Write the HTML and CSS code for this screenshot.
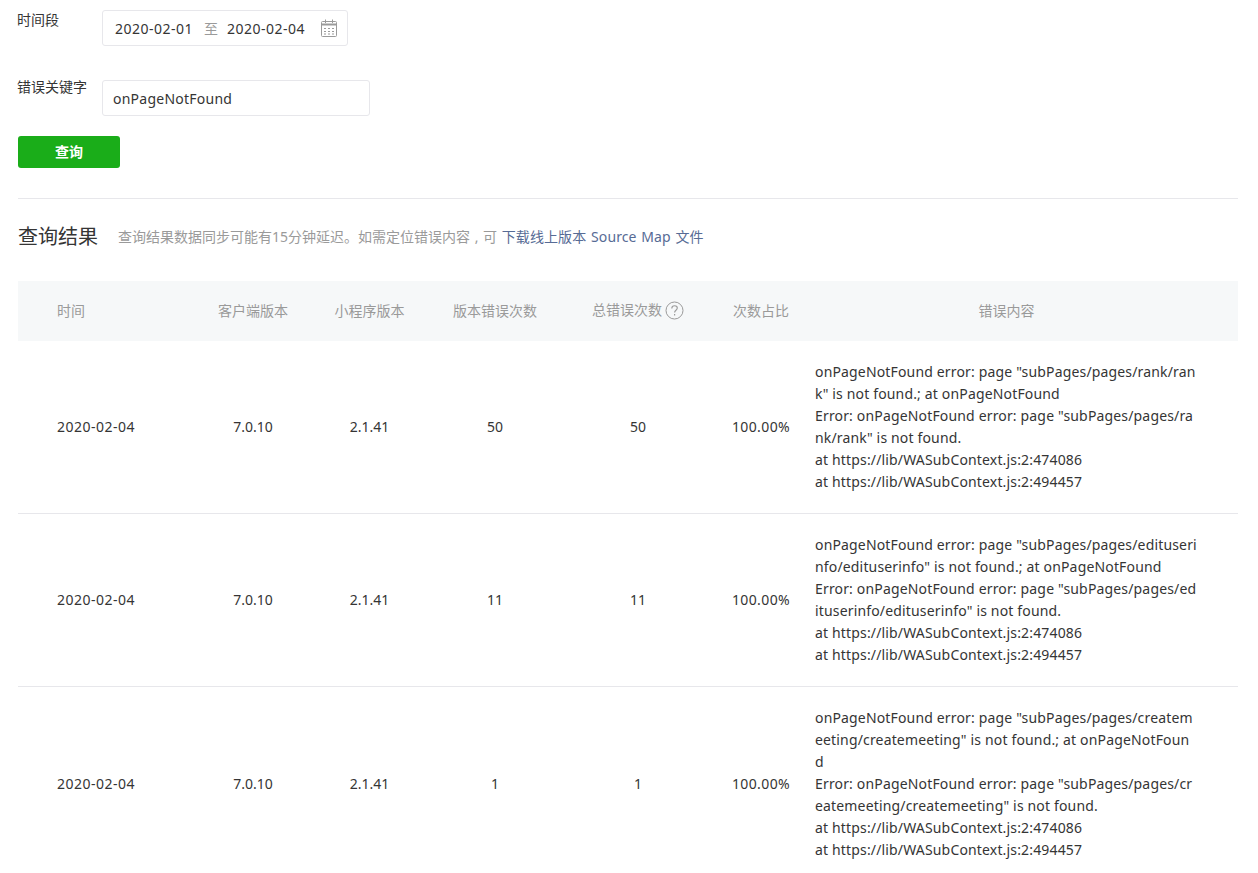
FILE: index.html
```html
<!DOCTYPE html>
<html lang="zh-CN">
<head>
<meta charset="utf-8">
<title>错误查询</title>
<link rel="stylesheet" href="styles.css">
</head>
<body>
<main class="page">
  <form class="form">
    <div class="field field-date">
      <label class="label">时间段</label>
      <div class="date-box">
        <span class="date">2020-02-01</span>
        <span class="to">至</span>
        <span class="date">2020-02-04</span>
        <svg class="cal" width="16" height="18" viewBox="0 0 16 18" fill="none" stroke="#9a9a9a" stroke-width="1">
          <rect x="0.5" y="2.5" width="15" height="15" rx="1"/>
          <path d="M0.5 5.5H15.5" stroke-width="2"/>
          <path d="M4.5 0.5V4M11.5 0.5V4"/>
          <path d="M3 9.5h2M7 9.5h2M11 9.5h2M3 12.5h2M7 12.5h2M11 12.5h2M3 15h2M7 15h2M11 15h2" stroke-width="1.2"/>
        </svg>
      </div>
    </div>
    <div class="field field-key">
      <label class="label">错误关键字</label>
      <div class="text-box">onPageNotFound</div>
    </div>
    <button class="btn" type="button">查询</button>
  </form>

  <section class="results">
    <div class="results-head">
      <h2 class="title">查询结果</h2>
      <p class="note">查询结果数据同步可能有15分钟延迟。如需定位错误内容 , 可 <a class="link" href="#">下载线上版本 Source Map 文件</a></p>
    </div>
    <table class="table">
      <colgroup>
        <col class="c1"><col class="c2"><col class="c3"><col class="c4"><col class="c5"><col class="c6"><col class="c7">
      </colgroup>
      <thead>
        <tr>
          <th class="first">时间</th>
          <th>客户端版本</th>
          <th>小程序版本</th>
          <th>版本错误次数</th>
          <th>总错误次数<svg class="help" width="19" height="19" viewBox="0 0 19 19" fill="none" stroke="#9a9a9a"><circle cx="9.5" cy="9.5" r="8.5"/><path d="M6.8 7.4c0-1.6 1.2-2.6 2.8-2.6 1.6 0 2.7 1 2.7 2.3 0 2.1-2.7 2.2-2.7 4.4" stroke-width="1.1"/><path d="M9.6 13v1.5" stroke-width="1.2"/></svg></th>
          <th>次数占比</th>
          <th class="last">错误内容</th>
        </tr>
      </thead>
      <tbody>
        <tr>
          <td class="first day">2020-02-04</td><td>7.0.10</td><td>2.1.41</td><td>50</td><td>50</td><td class="pct">100.00%</td>
          <td class="last msg">onPageNotFound error: page "subPages/pages/rank/rank" is not found.; at onPageNotFound<br>Error: onPageNotFound error: page "subPages/pages/rank/rank" is not found.<br>at https://lib/WASubContext.js:2:474086<br>at https://lib/WASubContext.js:2:494457</td>
        </tr>
        <tr>
          <td class="first day">2020-02-04</td><td>7.0.10</td><td>2.1.41</td><td>11</td><td>11</td><td class="pct">100.00%</td>
          <td class="last msg">onPageNotFound error: page "subPages/pages/edituserinfo/edituserinfo" is not found.; at onPageNotFound<br>Error: onPageNotFound error: page "subPages/pages/edituserinfo/edituserinfo" is not found.<br>at https://lib/WASubContext.js:2:474086<br>at https://lib/WASubContext.js:2:494457</td>
        </tr>
        <tr>
          <td class="first day">2020-02-04</td><td>7.0.10</td><td>2.1.41</td><td>1</td><td>1</td><td class="pct">100.00%</td>
          <td class="last msg">onPageNotFound error: page "subPages/pages/createmeeting/createmeeting" is not found.; at onPageNotFound<br>Error: onPageNotFound error: page "subPages/pages/createmeeting/createmeeting" is not found.<br>at https://lib/WASubContext.js:2:474086<br>at https://lib/WASubContext.js:2:494457</td>
        </tr>
      </tbody>
    </table>
  </section>
</main>
</body>
</html>
```
FILE: styles.css
```css
* { box-sizing: border-box; }
html, body { margin: 0; padding: 0; height: 873px; overflow: hidden; background: #fff; }
body {
  font-family: "Noto Sans", "Noto Sans CJK SC", sans-serif;
  font-size: 14px;
  color: #353535;
}
.page { padding: 10px 20px 0 18px; }

.form { display: flex; flex-direction: column; border-bottom: 1px solid #e7e7eb; padding-bottom: 30px; }
.field { display: flex; }
.field-date { height: 36px; margin-bottom: 34px; }
.field-key { height: 36px; margin-bottom: 20px; }
.label { width: 84px; font-size: 14px; line-height: 20px; color: #353535; margin-left: -1px; margin-right: 1px; }
.field-key .label { line-height: 14px; }
.date-box, .text-box {
  height: 36px;
  border: 1px solid #e7e7eb;
  border-radius: 3px;
  display: flex;
  align-items: center;
  background: #fff;
}
.date-box { width: 246px; padding: 0 10px 0 12px; }
.date { width: 80px; white-space: nowrap; letter-spacing: 0.5px; }
.to { width: 32px; text-align: center; color: #9a9a9a; }
.cal { margin-left: auto; }
.text-box { width: 268px; padding-left: 10px; letter-spacing: 0.24px; }
.btn {
  width: 102px;
  height: 32px;
  background: #1aad19;
  border: 0;
  border-radius: 3px;
  color: #fff;
  font: 700 14px "Noto Sans CJK SC", sans-serif;
  padding: 0 0 3px;
}

.results-head { display: flex; align-items: center; height: 82px; padding-bottom: 8px; }
.title { margin: 0 0 2px; font-size: 20px; font-weight: 400; color: #353535; width: 100px; }
.note { margin: 0; font-size: 14px; color: #9a9a9a; word-spacing: 1px; }
.link { color: #576b95; text-decoration: none; letter-spacing: 0.1px; }

.table { width: 1220px; border-collapse: collapse; table-layout: fixed; }
.c1 { width: 176px; }
.c2 { width: 118px; }
.c3 { width: 115px; }
.c4 { width: 136px; }
.c5 { width: 150px; }
.c6 { width: 96px; }
.c7 { width: 429px; }
th {
  height: 60px;
  background: #f6f8f9;
  font-size: 14px;
  font-weight: 400;
  color: #9a9a9a;
  text-align: center;
  padding: 0 0 3px;
}
td {
  text-align: center;
  padding: 20px 0;
  line-height: 22px;
  border-bottom: 1px solid #e7e7eb;
}
.first { text-align: left; padding-left: 39px; }
.day { letter-spacing: 0.5px; }
.pct { letter-spacing: 0.4px; }
.last { padding-left: 6px; padding-right: 40px; }
.msg { text-align: left; word-break: break-all; letter-spacing: 0.16px; }
.help { vertical-align: middle; margin-left: 3px; }
```
